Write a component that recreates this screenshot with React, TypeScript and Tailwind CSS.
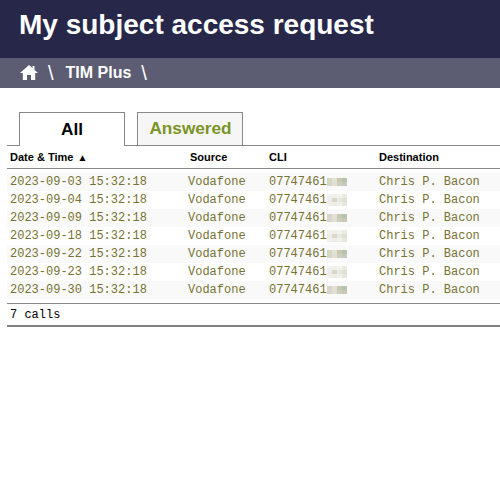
const rows = [
  ["2023-09-03", false],
  ["2023-09-04", true],
  ["2023-09-09", false],
  ["2023-09-18", true],
  ["2023-09-22", false],
  ["2023-09-23", true],
  ["2023-09-30", false],
] as const;

const darkBlur = ["bg-[#d8d6c2]", "bg-[#e2e1d6]", "bg-[#c9c7ae]", "bg-[#b4c2ae]", "bg-[#d6d5c6]", "bg-[#e0dfd5]", "bg-[#cfcdbb]", "bg-[#c9c9bb]"];
const lightBlur = ["bg-[#f3f3ed]", "bg-[#f1f1e9]", "bg-[#f3f3ec]", "bg-[#eaebe3]", "bg-[#eeeee6]", "bg-[#d9d8ca]", "bg-[#e9e9df]", "bg-[#dfe0d6]", "bg-[#f1f1ea]", "bg-[#eeeee6]", "bg-[#f0f0e9]", "bg-[#e6e7de]"];

const Blur = ({ light }: { light: boolean }) => (
  <span className={`grid w-[20px] grid-cols-4 ${light ? "h-[12px] grid-rows-3" : "h-[8px] grid-rows-2"}`}>
    {(light ? lightBlur : darkBlur).map((c, i) => (
      <span key={i} className={c} />
    ))}
  </span>
);

export default function App() {
  return (
    <div className="min-h-[500px] bg-white font-['Liberation_Sans',sans-serif]">
      <header className="flex h-[58px] items-center bg-[#27274a] pb-[8px] pl-[19px]">
        <h1 className="text-[28px] font-bold leading-none text-white">My subject access request</h1>
      </header>
      <nav className="flex h-[30px] items-center bg-[#5c5c72] pl-[20px] text-[16px] font-bold text-white">
        <svg viewBox="0 0 18 15" className="mb-[1px] h-[15px] w-[18px]" fill="currentColor">
          <path d="M9 0 L0 8 H2.8 V15 H7 V10 H11 V15 H15.2 V8 H18 L14.5 4.9 V1 H12.5 V3.1 Z" />
        </svg>
        <span className="ml-[10px] text-[20px] font-normal">\</span>
        <span className="ml-[12px]">TIM Plus</span>
        <span className="ml-[10px] text-[20px] font-normal">\</span>
      </nav>
      <main className="ml-[7px] pt-[24px]">
        <div className="flex h-[34px] items-end gap-[12px] border-b border-[#888888] pl-[12px]">
          <div className="-mb-px flex h-[34px] w-[106px] items-center justify-center border border-b-0 border-[#888888] bg-white text-[17.2px] font-bold text-black">All</div>
          <div className="flex h-[33px] w-[106px] items-center justify-center border border-b-0 border-[#888888] bg-[#f6f6f6] pl-[1px] text-[17.2px] font-bold text-[#7a9428]">Answered</div>
        </div>
        <div className="flex h-[23px] items-center border-b border-[#888888] pl-[3px] text-[11px] font-bold text-black">
          <span className="flex w-[180px] items-center">Date &amp; Time <span className="ml-[4px] text-[10px]">▲</span></span>
          <span className="w-[79px]">Source</span>
          <span className="w-[110px]">CLI</span>
          <span>Destination</span>
        </div>
        <div className="pt-[4px] font-['Liberation_Mono',monospace] text-[12px] text-[#777233]">
          {rows.map(([date, light]) => (
            <div key={date} className={`flex h-[18px] items-center pl-[3px] ${light ? "bg-white" : "bg-[#f9f9f9]"}`}>
              <span className="w-[178px]">{date} 15:32:18</span>
              <span className="w-[81px]">Vodafone</span>
              <span className="flex w-[110px] items-center">07747461<Blur light={light} /></span>
              <span>Chris P. Bacon</span>
            </div>
          ))}
        </div>
        <div className="mt-[4px] flex h-[24px] items-center border-y border-t-[#888888] border-b-2 border-b-[#808080] pl-[3px] font-['Liberation_Mono',monospace] text-[12px] text-black">
          7 calls
        </div>
      </main>
    </div>
  );
}
